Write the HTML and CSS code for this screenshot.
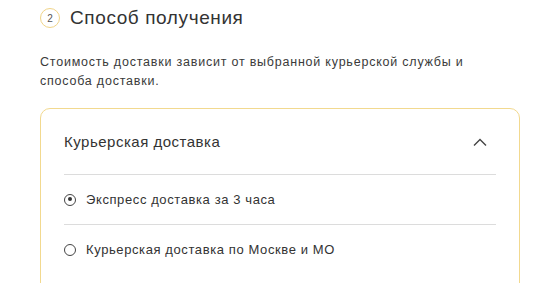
FILE: index.html
```html
<!DOCTYPE html>
<html lang="ru">
<head>
  <meta charset="UTF-8" />
  <title>Способ получения</title>
  <link rel="stylesheet" href="styles.css">
</head>
<body>
  <section class="step">
    <div class="step-head">
      <span class="step-num">2</span>
      <h2>Способ получения</h2>
    </div>
    <p class="step-note">Стоимость доставки зависит от выбранной курьерской службы и способа доставки.</p>

    <div class="delivery-card">
      <div class="delivery-top">
        <span>Курьерская доставка</span>
        <svg class="chevron" width="14" height="8" viewBox="0 0 14 8"><path d="M1 7.5L7 1.5L13 7.5" fill="none" stroke="#444" stroke-width="1.4"/></svg>
      </div>
      <label class="option">
        <span class="radio checked"></span>
        Экспресс доставка за 3 часа
      </label>
      <label class="option">
        <span class="radio"></span>
        Курьерская доставка по Москве и МО
      </label>
    </div>
  </section>
</body>
</html>
```

FILE: styles.css
```css
body {
  margin: 0;
  padding: 0;
  background: #fff;
  color: #333;
  font-family: 'Liberation Sans', Arial, sans-serif;
}
.step {
  padding: 7px 30px 0 40px;
}
.step-head {
  display: flex;
  align-items: center;
  gap: 10px;
}
.step-num {
  width: 20px;
  height: 20px;
  border: 1px solid #f0d488;
  border-radius: 50%;
  box-sizing: border-box;
  display: flex;
  align-items: center;
  justify-content: center;
  font-size: 10px;
  color: #555;
}
.step-head h2 {
  margin: 0;
  font-size: 19px;
  font-weight: normal;
  letter-spacing: 0.6px;
  color: #333;
}
.step-note {
  max-width: 440px;
  margin: 24px 0 0;
  font-size: 12.5px;
  line-height: 19px;
  letter-spacing: 0.78px;
  color: #3a3a3a;
}
.delivery-card {
  margin-top: 17px;
  border: 1px solid #f2d98f;
  border-radius: 10px;
  padding: 0 23px;
  height: 200px;
}
.delivery-top {
  display: flex;
  justify-content: space-between;
  align-items: center;
  height: 65px;
  border-bottom: 1px solid #dcdcdc;
  font-size: 15px;
  letter-spacing: 0.5px;
  padding-right: 9px;
}
.option {
  display: flex;
  align-items: center;
  gap: 10px;
  height: 49px;
  border-bottom: 1px solid #dcdcdc;
  font-size: 13px;
  letter-spacing: 0.6px;
  color: #333;
}
.option:last-child {
  border-bottom: none;
}
.radio {
  width: 12px;
  height: 12px;
  border: 1.3px solid #444;
  border-radius: 50%;
  box-sizing: border-box;
  position: relative;
}
.radio.checked::after {
  content: '';
  position: absolute;
  left: 2.5px;
  top: 2.5px;
  width: 4.4px;
  height: 4.4px;
  border-radius: 50%;
  background: #333;
}
```
